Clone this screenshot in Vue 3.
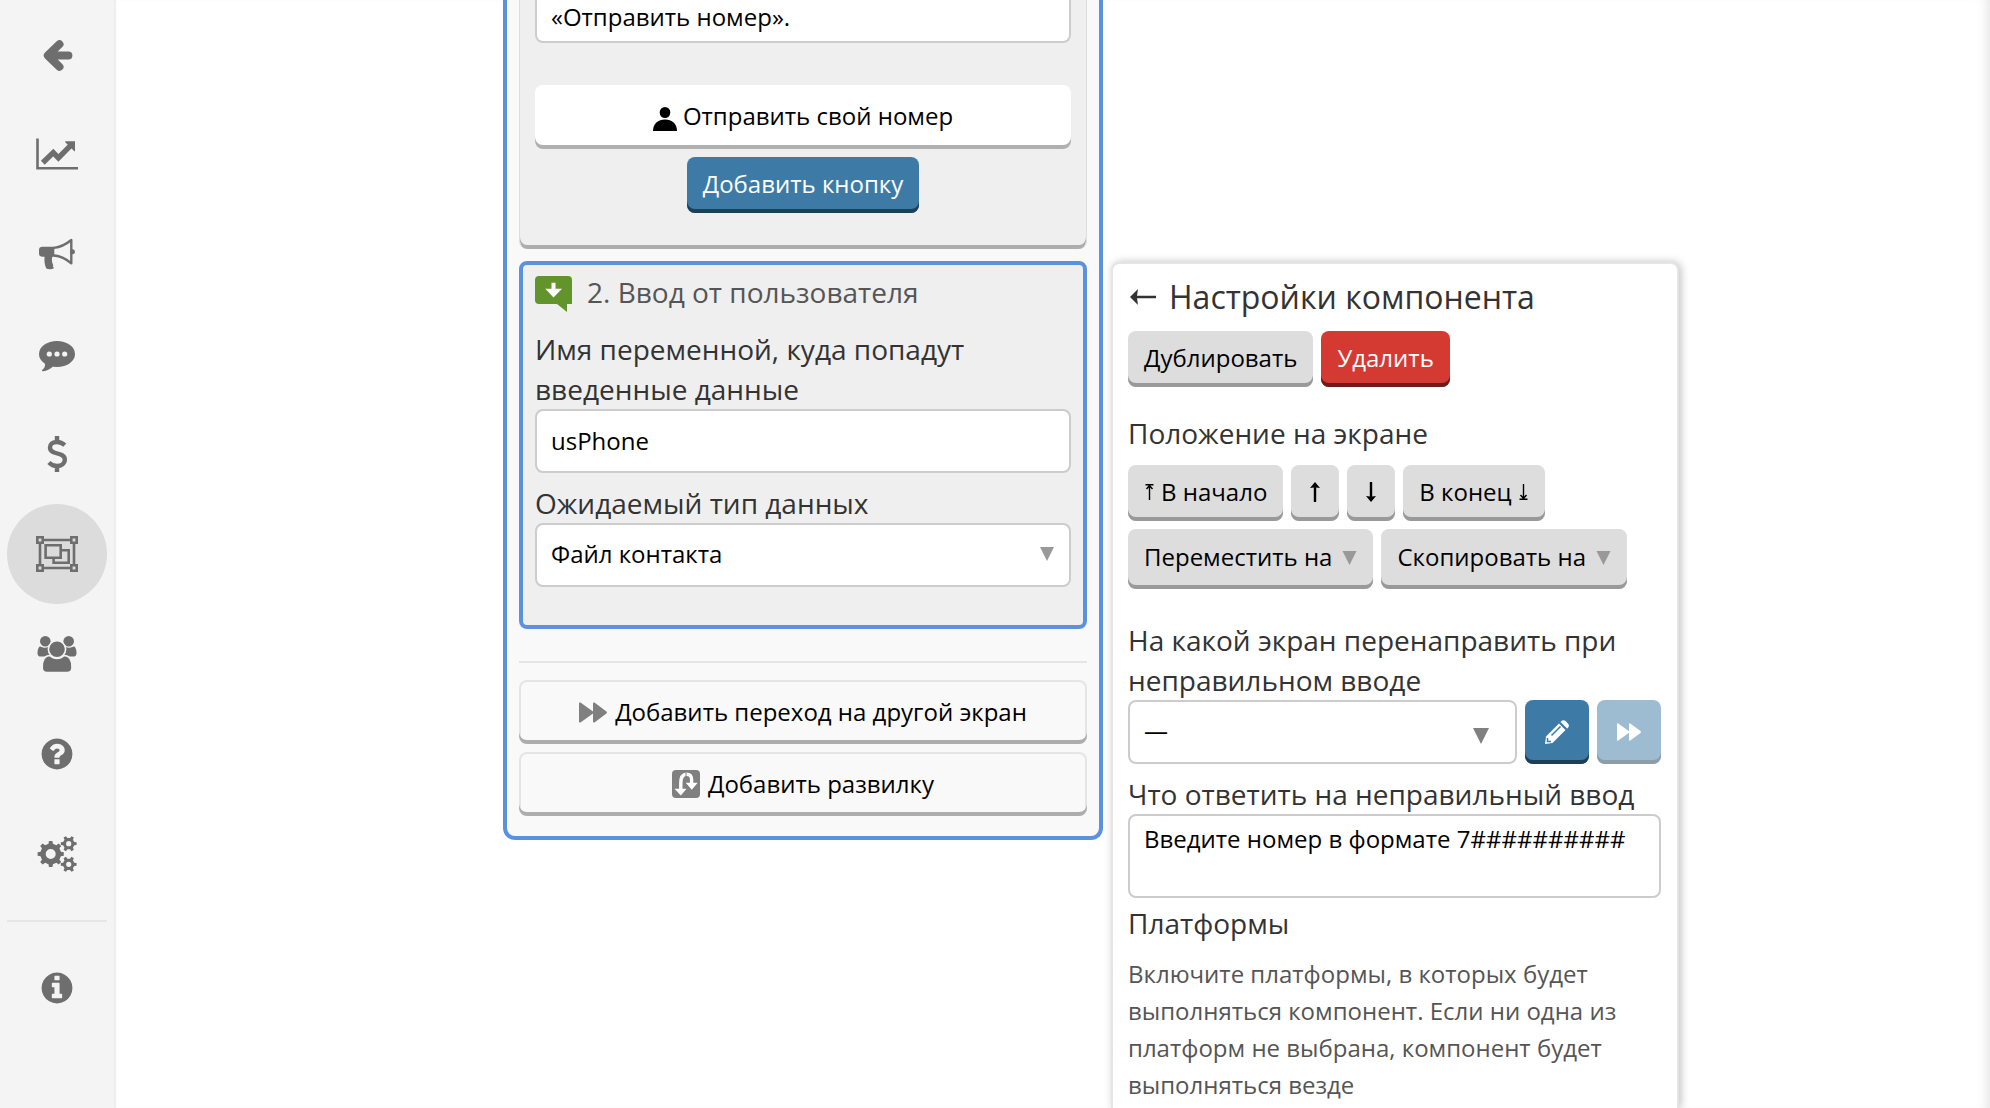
<script setup>
import { ref } from 'vue'

const variableName = ref('usPhone')
const dataType = ref('contact')
const message = ref('«Отправить номер».')
const redirect = ref('none')
const wrongReply = ref('Введите номер в формате 7##########')

function gear(cx, cy, outer, inner, hole, teeth) {
  const step = (Math.PI * 2) / teeth
  const at = (r, a) => `${(cx + r * Math.cos(a)).toFixed(2)} ${(cy + r * Math.sin(a)).toFixed(2)}`
  let d = ''
  for (let i = 0; i < teeth; i++) {
    const a = i * step
    d += `${i ? 'L' : 'M'}${at(inner, a - step * 0.27)}L${at(outer, a - step * 0.17)}L${at(outer, a + step * 0.17)}L${at(inner, a + step * 0.27)}`
  }
  return `${d}ZM${cx - hole} ${cy}a${hole} ${hole} 0 1 0 ${hole * 2} 0a${hole} ${hole} 0 1 0 ${-hole * 2} 0Z`
}

const cogs = gear(15.7, 22, 13.2, 10.4, 5, 8) + gear(33.7, 11.7, 8, 5.8, 2.6, 6) + gear(33.7, 32.3, 8, 5.8, 2.6, 6)
</script>

<template>
  <div class="page">
    <nav class="sidebar" aria-label="Меню">
      <a href="#" class="nav-item" aria-label="Назад">
        <svg class="icon" viewBox="0 0 44 44" fill="none" stroke="currentColor" stroke-width="8" stroke-linecap="round" stroke-linejoin="round">
          <path d="M24.5 12.2L12.8 23.5L24.5 34.8M14 23.5H33.4" />
        </svg>
      </a>
      <a href="#" class="nav-item" aria-label="Статистика">
        <svg class="icon" viewBox="0 0 44 44">
          <path d="M2.5 6.5V36.3H43" fill="none" stroke="currentColor" stroke-width="2.6" />
          <path d="M7.8 30.8L18.3 20.6L23.4 25.8L36 13.2" fill="none" stroke="currentColor" stroke-width="5.4" />
          <path d="M31 9.2H40V18.4Q40 20 38.8 18.8L30.5 10.5Q29.3 9.2 31 9.2Z" fill="currentColor" />
        </svg>
      </a>
      <a href="#" class="nav-item" aria-label="Рассылки">
        <svg class="icon" viewBox="0 0 44 44">
          <path d="M7.5 14.7H19.3V24.7H17.4C16.3 28 17.2 31 18.3 33.2C17.4 34.6 18.2 35.4 19.2 36C17 37.6 13.4 37.7 11.4 36.6C9.6 33 9.1 28.6 9.6 24.7H7.5Q4 24.7 4 21.5V18Q4 14.7 7.5 14.7Z" fill="currentColor" />
          <path d="M19 15.9C27 15 32 11.5 36.3 8V31.3C32 27.6 27 24.3 19 23.5" fill="none" stroke="currentColor" stroke-width="2.4" stroke-linejoin="round" />
          <circle cx="37.4" cy="19.7" r="2.5" fill="currentColor" />
        </svg>
      </a>
      <a href="#" class="nav-item" aria-label="Диалоги">
        <svg class="icon" viewBox="0 0 44 44">
          <ellipse cx="22" cy="22" rx="18" ry="13" fill="currentColor" />
          <path d="M10 30Q11 35 7 38.3Q6.6 39.5 8 39.3Q14 38.5 19 33.5Z" fill="currentColor" />
          <g fill="#f4f4f4">
            <circle cx="14.3" cy="22" r="2.6" />
            <circle cx="22" cy="22" r="2.6" />
            <circle cx="29.7" cy="22" r="2.6" />
          </g>
        </svg>
      </a>
      <a href="#" class="nav-item" aria-label="Оплата">
        <svg class="icon" viewBox="0 0 44 44" fill="none" stroke="currentColor" stroke-width="4.4">
          <path d="M29.8 13.2C27.5 11 25 10 22 10C17.5 10 15 12.4 15 15.4C15 23.5 29.8 19.5 29.8 27.6C29.8 31.5 26.5 34 22 34C18.5 34 16 32.6 13.9 30.4M22 4V10M22 34V40" />
        </svg>
      </a>
      <a href="#" class="nav-item active" aria-label="Конструктор" aria-current="page">
        <svg class="icon" viewBox="0 0 44 44" fill="none" stroke="currentColor" stroke-width="2.6">
          <path d="M9 8H35M9 36H35M5 12V32M39 12V32" />
          <path d="M2.3 5.3H7.7V10.7H2.3ZM36.3 5.3H41.7V10.7H36.3ZM2.3 33.3H7.7V38.7H2.3ZM36.3 33.3H41.7V38.7H36.3Z" />
          <path d="M10.6 13.3H25.7V25.7H10.6ZM25.7 18.3H33.7V30.7H18.6V25.7" />
        </svg>
      </a>
      <a href="#" class="nav-item" aria-label="Пользователи">
        <svg class="icon" viewBox="0 0 44 44" fill="currentColor">
          <circle cx="10.3" cy="9.3" r="5.3" />
          <circle cx="33.7" cy="9.3" r="5.3" />
          <path d="M5 14.3C8 16.2 12 16.2 15 14.6L16 24.6H6Q2.5 24.6 2.5 21.5C2.5 18.5 3 15.5 5 14.3Z" />
          <path d="M39 14.3C36 16.2 32 16.2 29 14.6L28 24.6H38Q41.5 24.6 41.5 21.5C41.5 18.5 41 15.5 39 14.3Z" />
          <g stroke="#f4f4f4" stroke-width="1.6">
            <path d="M15 23.5C19 27.5 25 27.5 29 23.5C35 23.5 37 29.5 37 35.5Q37 40.6 32 40.6H12Q7.2 40.6 7.2 35.5C7.2 29.5 9 23.5 15 23.5Z" />
            <circle cx="22" cy="17.3" r="8.6" />
          </g>
        </svg>
      </a>
      <a href="#" class="nav-item" aria-label="Помощь">
        <svg class="icon-round" viewBox="0 0 1792 1792" fill="currentColor">
          <path d="M1024 1376v-192q0-14-9-23t-23-9h-192q-14 0-23 9t-9 23v192q0 14 9 23t23 9h192q14 0 23-9t9-23zm256-672q0-88-55.5-163t-138.5-116-170-41q-243 0-371 213-15 24 8 42l132 100q7 6 19 6 16 0 25-12 53-68 86-92 34-24 86-24 48 0 85.5 26t37.5 59q0 38-20 61t-68 45q-63 28-115.5 86.5t-52.5 125.5v36q0 14 9 23t23 9h192q14 0 23-9t9-23q0-19 21.5-49.5t54.5-49.5q32-18 49-28.5t46-35 44.5-48 28-60.5 12.5-81zm384 192q0 209-103 385.5t-279.5 279.5-385.5 103-385.5-103-279.5-279.5-103-385.5 103-385.5 279.5-279.5 385.5-103 385.5 103 279.5 279.5 103 385.5z" />
        </svg>
      </a>
      <a href="#" class="nav-item" aria-label="Настройки">
        <svg class="icon" viewBox="0 0 44 44" fill="currentColor" fill-rule="evenodd"><path :d="cogs" /></svg>
      </a>
      <hr class="nav-line" />
      <a href="#" class="nav-item" aria-label="Информация">
        <svg class="icon-round" viewBox="0 0 1792 1792" fill="currentColor">
          <path d="M1152 1376v-160q0-14-9-23t-23-9h-96v-512q0-14-9-23t-23-9h-320q-14 0-23 9t-9 23v160q0 14 9 23t23 9h96v320h-96q-14 0-23 9t-9 23v160q0 14 9 23t23 9h448q14 0 23-9t9-23zm-128-896v-160q0-14-9-23t-23-9h-192q-14 0-23 9t-9 23v160q0 14 9 23t23 9h192q14 0 23-9t9-23zm640 416q0 209-103 385.5t-279.5 279.5-385.5 103-385.5-103-279.5-279.5-103-385.5 103-385.5 279.5-279.5 385.5-103 385.5 103 279.5 279.5 103 385.5z" />
        </svg>
      </a>
    </nav>

    <main class="canvas">
      <section class="screen">
        <article class="card card-message">
          <textarea v-model="message" class="field message" rows="1" aria-label="Текст сообщения"></textarea>
          <button type="button" class="btn wide white">
            <svg class="i-user" viewBox="0 0 24 24">
              <ellipse cx="12" cy="5.5" rx="5.3" ry="5.5" />
              <path d="M0 24C0 16.5 5 12.4 12 12.4S24 16.5 24 24Z" />
            </svg>
            <span>Отправить свой номер</span>
          </button>
          <button type="button" class="btn blue">Добавить кнопку</button>
        </article>

        <article class="card card-input">
          <h2 class="card-title">
            <svg class="i-input" viewBox="0 0 37 36">
              <path d="M4 0H33Q37 0 37 4V28H32V36L22 28H4Q0 28 0 24V4Q0 0 4 0Z" fill="#63932b" />
              <path d="M16.5 6.7H20.5V12.7H27L18.5 21.5L10.3 12.7H16.5Z" fill="#fff" />
            </svg>
            2. Ввод от пользователя
          </h2>
          <label class="label" for="variable">Имя переменной, куда попадут введенные данные</label>
          <input id="variable" v-model="variableName" class="field" type="text" />
          <label class="label next" for="data-type">Ожидаемый тип данных</label>
          <div class="select">
            <select id="data-type" v-model="dataType" class="field">
              <option value="contact">Файл контакта</option>
            </select>
            <svg class="caret" viewBox="0 0 14 14"><path d="M0 0H14L7 14Z" /></svg>
          </div>
        </article>

        <hr class="line" />
        <div class="stack">
          <button type="button" class="btn wide outline">
            <svg class="i-forward" viewBox="0 0 28 21"><path d="M0 1.5Q0 0 1.5 .6L14 9.5V1.5Q14 0 15.5 .6L27.4 9.4Q28.5 10.5 27.4 11.6L15.5 20.4Q14 21 14 19.5V11.5L1.5 20.4Q0 21 0 19.5Z" /></svg>
            <span>Добавить переход на другой экран</span>
          </button>
          <button type="button" class="btn wide outline">
            <svg class="i-fork" viewBox="0 0 28 28">
              <rect width="28" height="28" rx="4" fill="#808080" />
              <path d="M8.8 19V13C8.8 7 10.5 4.6 14 4.2C18 4 19.6 6 19.6 9V13" fill="none" stroke="#fff" stroke-width="3.4" />
              <path d="M2.5 18.7H14.5L8.8 25.5ZM13.7 12.8H25.7L19.8 19.7Z" fill="#fff" />
              <path d="M14 1V9" stroke="#808080" stroke-width="1" />
            </svg>
            <span>Добавить развилку</span>
          </button>
        </div>
      </section>

      <aside class="panel">
        <h1 class="panel-title">
          <svg class="i-back" viewBox="-2 0 29 16"><path d="M0 8L8 0L7 6.700H26V9.300H7L8 16Z" /></svg>
          Настройки компонента
        </h1>
        <div class="row">
          <button type="button" class="btn grey">Дублировать</button>
          <button type="button" class="btn red">Удалить</button>
        </div>

        <h2 class="label position">Положение на экране</h2>
        <div class="row">
          <button type="button" class="btn grey">
            <svg class="i-end" viewBox="0 0 8 16"><path d="M0 .7H8M4 1V16M1 5L4 1.5L7 5" /></svg>
            В начало
          </button>
          <button type="button" class="btn grey arrow" aria-label="Выше">
            <svg class="i-arrow" viewBox="0 0 12 20"><path d="M6 0L11 6L7.2 5.4V20H4.8V5.4L1 6Z" /></svg>
          </button>
          <button type="button" class="btn grey arrow" aria-label="Ниже">
            <svg class="i-arrow" viewBox="0 0 12 20"><path d="M6 20L11 14L7.2 14.6V0H4.8V14.6L1 14Z" /></svg>
          </button>
          <button type="button" class="btn grey">
            В конец
            <svg class="i-end" viewBox="0 0 8 16"><path d="M0 15.3H8M4 15V0M1 11L4 14.5L7 11" /></svg>
          </button>
          <button type="button" class="btn grey menu">Переместить на <svg class="caret-inline" viewBox="0 0 14 14"><path d="M0 0H14L7 14Z" /></svg></button>
          <button type="button" class="btn grey menu">Скопировать на <svg class="caret-inline" viewBox="0 0 14 14"><path d="M0 0H14L7 14Z" /></svg></button>
        </div>

        <label class="label redirect" for="redirect">На какой экран перенаправить при неправильном вводе</label>
        <div class="redirect-row">
          <div class="select">
            <select id="redirect" v-model="redirect" class="field">
              <option value="none">—</option>
            </select>
            <svg class="caret dark" viewBox="0 0 14 14"><path d="M0 0H14L7 14Z" /></svg>
          </div>
          <button type="button" class="btn blue square" aria-label="Редактировать">
            <svg class="i-pencil" viewBox="0 0 24 24">
              <path d="M1 16.5L14.5 3L21 9.5L7.5 23L0 24Z" fill="#fff" />
              <path d="M15.8 1.8Q18.2-.8 20.8 1.3L22.7 3.2Q25.2 5.8 22.6 8.2L22.2 8.5L15.5 2.1Z" fill="#fff" />
              <path d="M6.5 15.5L15.5 6.5M2.5 18V21.5H6M14.5 3L21 9.5" fill="none" stroke="#3d7ba6" stroke-width="1.5" />
            </svg>
          </button>
          <button type="button" class="btn blue square" disabled aria-label="Перейти">
            <svg class="i-forward small" viewBox="0 0 28 21"><path d="M0 1.5Q0 0 1.5 .6L14 9.5V1.5Q14 0 15.5 .6L27.4 9.4Q28.5 10.5 27.4 11.6L15.5 20.4Q14 21 14 19.5V11.5L1.5 20.4Q0 21 0 19.5Z" /></svg>
          </button>
        </div>

        <label class="label next" for="reply">Что ответить на неправильный ввод</label>
        <textarea id="reply" v-model="wrongReply" class="field reply" rows="2"></textarea>

        <h2 class="label platforms">Платформы</h2>
        <p class="hint">Включите платформы, в которых будет выполняться компонент. Если ни одна из платформ не выбрана, компонент будет выполняться везде</p>
      </aside>
    </main>
  </div>
</template>

<style>
body {
  margin: 0;
  background: #fff;
}
</style>

<style scoped>
* {
  box-sizing: border-box;
}

.page {
  display: flex;
  height: 100vh;
  overflow: hidden;
  font-family: "Open Sans", "Noto Sans", sans-serif;
  font-size: 24px;
  color: #333;
}

.sidebar {
  flex: none;
  width: 116px;
  padding: 4px 7px;
  background: #f4f4f4;
  border-right: 2px solid #eee;
}

.nav-item {
  display: flex;
  align-items: center;
  justify-content: center;
  width: 100px;
  height: 100px;
  border-radius: 50%;
  color: #6e6e6e;
}

.nav-item.active {
  background: #dcdcdc;
}

.icon {
  width: 44px;
  height: 44px;
}

.icon-round {
  width: 36px;
  height: 36px;
}

.nav-line {
  height: 2px;
  width: 100px;
  margin: 16px 0;
  border: 0;
  background: #e6e6e6;
}

.canvas {
  flex: 1;
  display: flex;
  align-items: flex-start;
  gap: 8px;
  padding-left: 387px;
  box-shadow: inset -10px 0 12px -8px rgba(0, 0, 0, 0.12);
}

.screen {
  flex: none;
  width: 600px;
  padding: 0 12px 20px;
  background: #f9f9f9;
  border: 4px solid #5b92de;
  border-top: 0;
  border-radius: 0 0 12px 12px;
}

.card {
  background: #efefef;
  border-radius: 8px;
}

.card-message {
  display: flex;
  flex-direction: column;
  align-items: center;
  padding: 0 15px 36px;
  border: 1px solid #ddd;
  border-top: 0;
  border-bottom: 0;
  border-radius: 0 0 8px 8px;
  box-shadow: inset 0 -4px 0 #adadad;
}

.card-input {
  margin-top: 12px;
  padding: 7px 12px 38px;
  border: 4px solid #5b92de;
}

.card-title {
  display: flex;
  align-items: center;
  gap: 15px;
  margin: 0 0 17px;
  font-size: 28px;
  font-weight: 400;
  line-height: 40px;
  color: #555;
}

.i-input {
  width: 37px;
  height: 36px;
  margin-top: 4px;
}

.label {
  display: block;
  margin: 0;
  font-size: 28px;
  font-weight: 400;
  line-height: 40px;
}

.label.next {
  margin-top: 10px;
}

.field {
  display: block;
  width: 100%;
  height: 64px;
  margin: 0;
  padding: 0 14px 2px;
  border: 2px solid #ccc;
  border-radius: 8px;
  outline: 0;
  background: #fff;
  color: #000;
  font: inherit;
  line-height: 32px;
  resize: none;
  appearance: none;
  overflow: hidden;
}

.message {
  height: 43px;
  margin-bottom: 42px;
  padding-top: 1px;
  border-top: 0;
  border-radius: 0 0 8px 8px;
}

.reply {
  height: 84px;
  padding: 7px 14px;
}

.select {
  position: relative;
  flex: 1;
}

.caret {
  position: absolute;
  top: 24px;
  right: 17px;
  width: 14px;
  height: 14px;
  fill: #999;
  pointer-events: none;
}

.caret.dark {
  top: 28px;
  right: 28px;
  width: 16px;
  height: 16px;
  fill: #808080;
}

.btn {
  display: flex;
  align-items: center;
  justify-content: center;
  gap: 6px;
  height: 56px;
  margin: 0;
  padding: 0 16px 2px;
  border: 0;
  border-radius: 8px;
  font: inherit;
  line-height: 32px;
  white-space: nowrap;
  color: #000;
}

.wide {
  width: 100%;
  height: 64px;
}

.white {
  margin-bottom: 8px;
  background: #fff;
  box-shadow: inset 0 -4px 0 #b0b0b0;
}

.outline {
  gap: 8px;
  padding-bottom: 0;
  background: #f9f9f9;
  box-shadow: inset 0 -4px 0 #adadad, inset 0 0 0 2px #e5e5e5;
}

.blue {
  background: #3d7ba6;
  box-shadow: inset 0 -4px 0 #1e3f56;
  color: #fff;
}

.grey {
  background: #ddd;
  box-shadow: inset 0 -4px 0 #999;
}

.red {
  background: #d43932;
  box-shadow: inset 0 -4px 0 #6b1d19;
  color: #fff;
}

.arrow {
  width: 48px;
}

.menu {
  gap: 10px;
  height: 60px;
  padding-bottom: 4px;
}

.caret-inline {
  width: 15px;
  height: 14px;
  margin-top: 2px;
  fill: #999;
}

.square {
  width: 64px;
  height: 64px;
  padding: 0;
}

.square:disabled {
  opacity: 0.5;
}

.i-user {
  width: 24px;
  height: 24px;
  margin-top: 6px;
}

.i-back {
  width: 29px;
  height: 16px;
  fill: #333;
}

.i-arrow {
  width: 12px;
  height: 20px;
}

.i-end {
  width: 11px;
  height: 16px;
  fill: none;
  stroke: #000;
  stroke-width: 1.4;
}

.i-forward {
  width: 28px;
  height: 21px;
  fill: #808080;
}

.i-forward.small {
  width: 24px;
  height: 18px;
  fill: #fff;
}

.i-fork {
  width: 28px;
  height: 28px;
}

.i-pencil {
  width: 24px;
  height: 24px;
}

.line {
  height: 2px;
  margin: 32px 0 17px;
  border: 0;
  background: #e5e5e5;
}

.stack {
  display: flex;
  flex-direction: column;
  gap: 8px;
}

.panel {
  flex: none;
  align-self: stretch;
  width: 568px;
  margin-top: 262px;
  padding: 13px 16px 0 15px;
  border: 2px solid #e5e5e5;
  border-bottom: 0;
  border-radius: 8px 8px 0 0;
  background: #fff;
  box-shadow: 2px 0 8px rgba(0, 0, 0, 0.25);
}

.panel-title {
  display: flex;
  align-items: center;
  gap: 12px;
  margin: 0 0 14px;
  font-size: 32px;
  font-weight: 400;
  line-height: 40px;
}

.row {
  display: flex;
  flex-wrap: wrap;
  gap: 8px;
}

.position {
  margin: 26px 0 12px;
}

.redirect {
  margin-top: 31px;
}

.redirect-row {
  display: flex;
  gap: 8px;
}

.platforms {
  margin: 5px 0 12px;
}

.hint {
  margin: 0;
  line-height: 37px;
  color: #555;
}
</style>
